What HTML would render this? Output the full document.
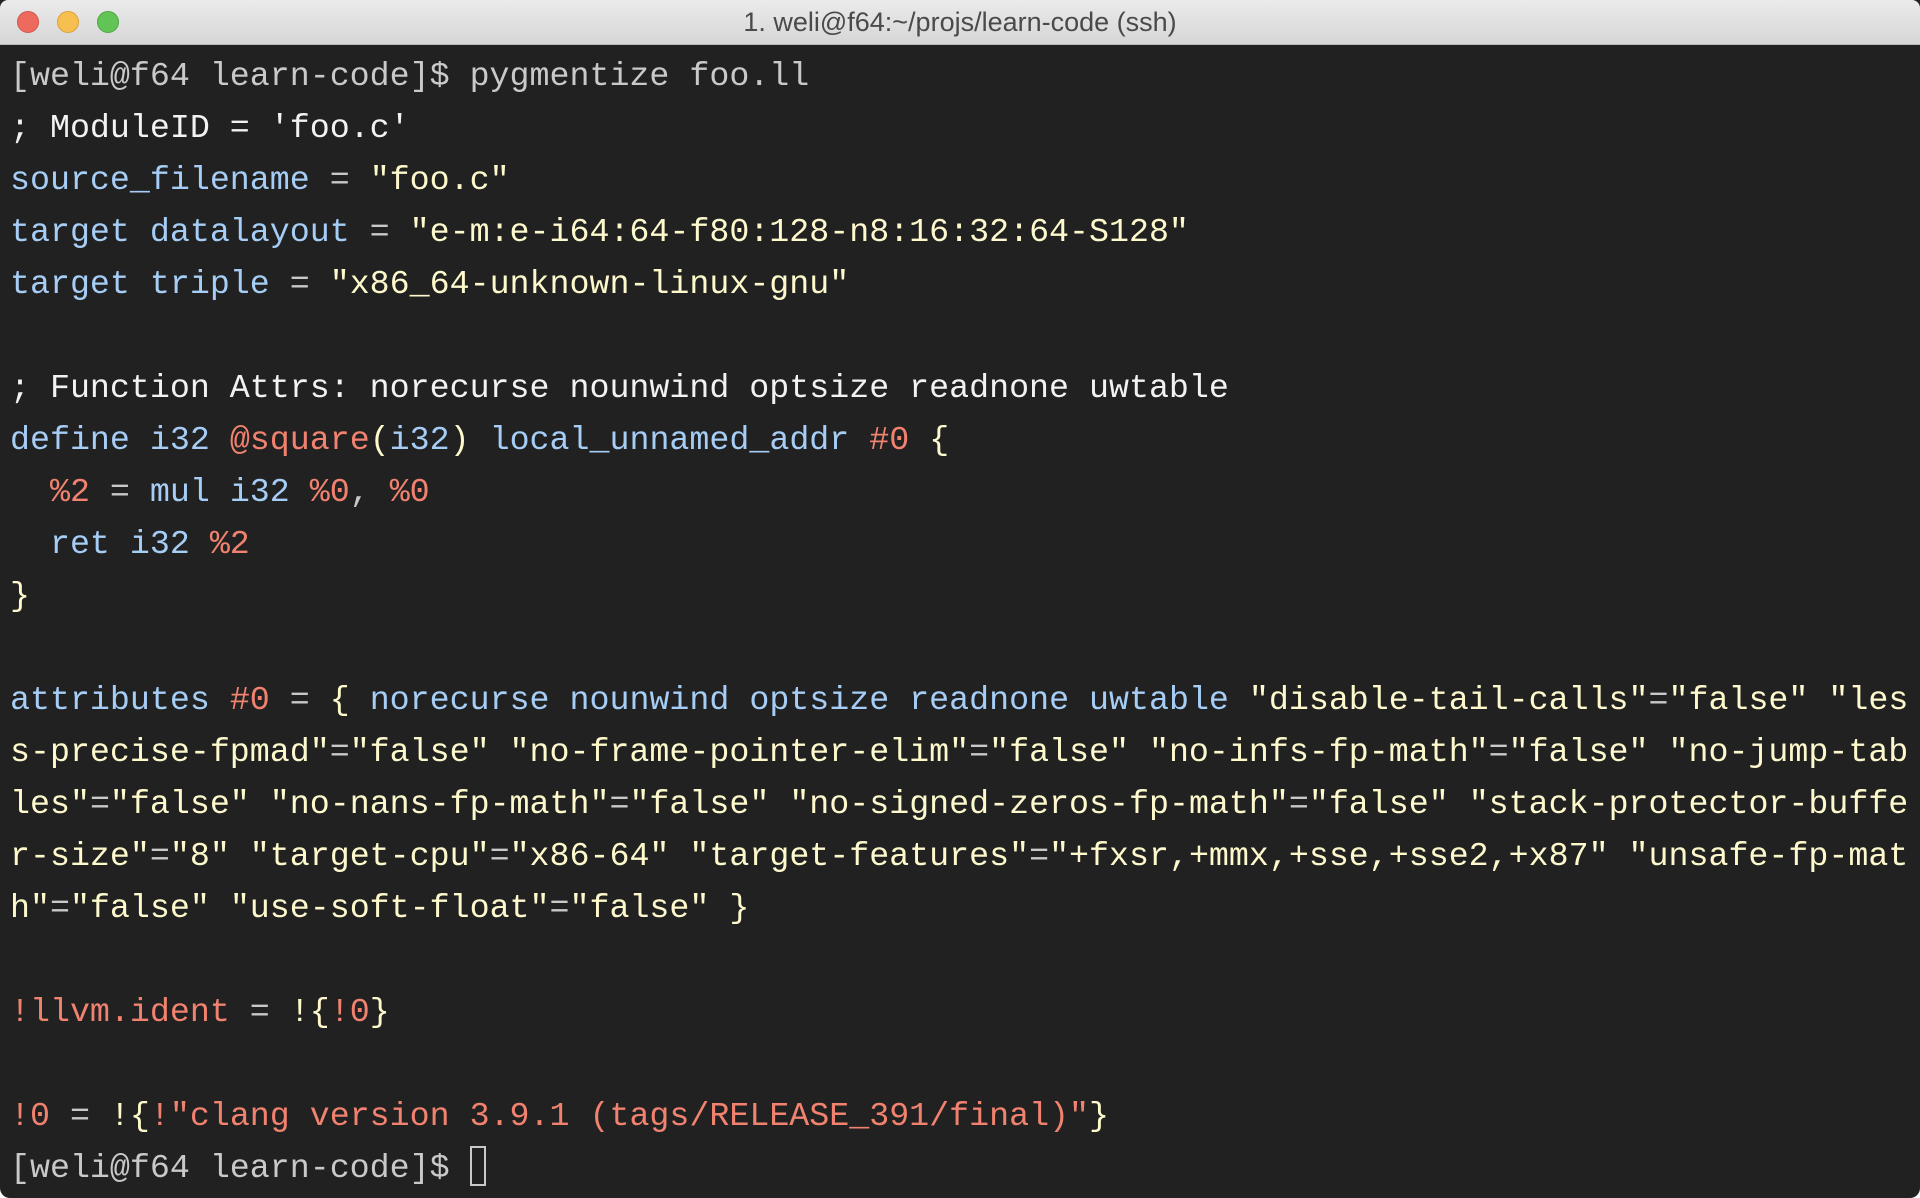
<!DOCTYPE html>
<html><head><meta charset="utf-8"><style>
html,body{margin:0;padding:0;background:#fff;width:1920px;height:1198px;overflow:hidden}
.win{position:absolute;left:0;top:0;width:1920px;height:1198px;background:#212121;border-radius:0 0 10px 10px;overflow:hidden}
.tb{position:absolute;left:0;top:0;width:1920px;height:45px;background:linear-gradient(#ebebeb,#d6d6d6);border-bottom:1px solid #b8b8b8;box-sizing:border-box;border-radius:8px 8px 0 0}
.tb .t{position:absolute;left:0;right:0;top:7px;text-align:center;font:27px "Liberation Sans",sans-serif;color:#4a4a4a}
.d{position:absolute;top:11px;width:22px;height:22px;border-radius:50%;box-sizing:border-box}
pre{position:absolute;left:10px;top:50px;margin:0;font:33.3px/52px "Liberation Mono",monospace;color:#c9c9c9;white-space:pre}
.b{color:#a6cdf5}.r{color:#f0826f}.y{color:#fdf9cc}.w{color:#f2f2f2}.g{color:#c9c9c9}
.cur{display:inline-block;width:16px;height:40px;border:2px solid #c9c9c9;box-sizing:border-box;vertical-align:-9px}
</style></head><body><div class="win">
<div class="tb"><div class="d" style="left:17px;background:#ee6a5e;border:1px solid #d2544a"></div><div class="d" style="left:57px;background:#f6bf4f;border:1px solid #d9a13b"></div><div class="d" style="left:97px;background:#62c454;border:1px solid #4fa53f"></div><div class="t">1. weli@f64:~/projs/learn-code (ssh)</div></div>
<pre><span class="g">[weli@f64 learn-code]$ pygmentize foo.ll</span>
<span class="w">; ModuleID = 'foo.c'</span>
<span class="b">source_filename</span> = <span class="y">"foo.c"</span>
<span class="b">target datalayout</span> = <span class="y">"e-m:e-i64:64-f80:128-n8:16:32:64-S128"</span>
<span class="b">target triple</span> = <span class="y">"x86_64-unknown-linux-gnu"</span>

<span class="w">; Function Attrs: norecurse nounwind optsize readnone uwtable</span>
<span class="b">define i32</span> <span class="r">@square</span><span class="y">(</span><span class="b">i32</span><span class="y">)</span> <span class="b">local_unnamed_addr</span> <span class="r">#0</span> <span class="y">{</span>
  <span class="r">%2</span> = <span class="b">mul i32</span> <span class="r">%0</span>, <span class="r">%0</span>
  <span class="b">ret i32</span> <span class="r">%2</span>
<span class="y">}</span>

<span class="b">attributes</span> <span class="r">#0</span> = <span class="y">{</span> <span class="b">norecurse nounwind optsize readnone uwtable</span> <span class="y">"disable-tail-calls"</span>=<span class="y">"false"</span> <span class="y">"les
s-precise-fpmad"</span>=<span class="y">"false"</span> <span class="y">"no-frame-pointer-elim"</span>=<span class="y">"false"</span> <span class="y">"no-infs-fp-math"</span>=<span class="y">"false"</span> <span class="y">"no-jump-tab
les"</span>=<span class="y">"false"</span> <span class="y">"no-nans-fp-math"</span>=<span class="y">"false"</span> <span class="y">"no-signed-zeros-fp-math"</span>=<span class="y">"false"</span> <span class="y">"stack-protector-buffe
r-size"</span>=<span class="y">"8"</span> <span class="y">"target-cpu"</span>=<span class="y">"x86-64"</span> <span class="y">"target-features"</span>=<span class="y">"+fxsr,+mmx,+sse,+sse2,+x87"</span> <span class="y">"unsafe-fp-mat
h"</span>=<span class="y">"false"</span> <span class="y">"use-soft-float"</span>=<span class="y">"false"</span> <span class="y">}</span>

<span class="r">!llvm.ident</span> = <span class="y">!{</span><span class="r">!0</span><span class="y">}</span>

<span class="r">!0</span> = <span class="y">!{</span><span class="r">!"clang version 3.9.1 (tags/RELEASE_391/final)"</span><span class="y">}</span>
<span class="g">[weli@f64 learn-code]$ </span><span class="cur"></span></pre>
</div></body></html>
